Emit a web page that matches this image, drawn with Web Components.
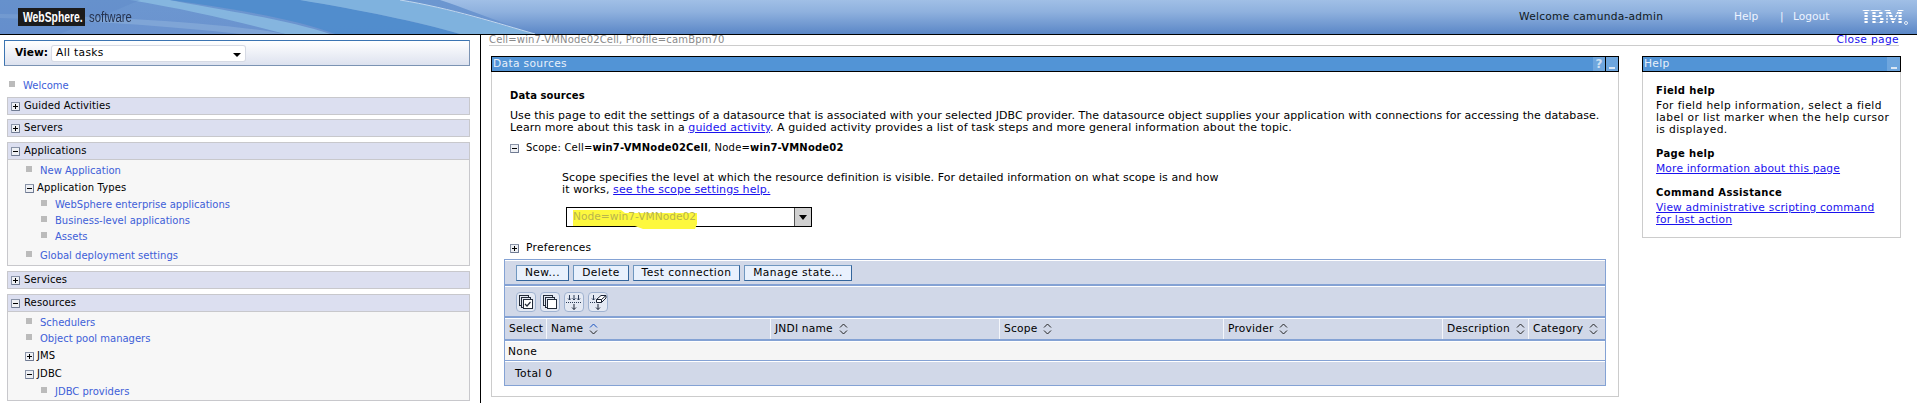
<!DOCTYPE html>
<html>
<head>
<meta charset="utf-8">
<title>WebSphere Integrated Solutions Console</title>
<style>
  html, body { margin: 0; height: 403px; overflow: hidden; background: #fff; }
  body { font: 10.67px/12px "DejaVu Sans", Verdana, sans-serif; color: #000; }
  .page { display: flex; height: 368px; }
</style>
</head>
<body>
<ws-banner></ws-banner>
<div class="page">
  <ws-nav>
    <nav-link level="0" style="margin-top:12px">Welcome</nav-link>
    <nav-section label="Guided Activities" style="margin-top:3px"></nav-section>
    <nav-section label="Servers" style="margin-top:4px"></nav-section>
    <nav-section label="Applications" open style="margin-top:5px">
      <nav-link level="1" style="margin-top:3px">New Application</nav-link>
      <nav-label state="minus" style="margin-top:1px">Application Types</nav-label>
      <nav-link level="2" style="margin-top:1px">WebSphere enterprise applications</nav-link>
      <nav-link level="2">Business-level applications</nav-link>
      <nav-link level="2">Assets</nav-link>
      <nav-link level="1" style="margin:3px 0 1px">Global deployment settings</nav-link>
    </nav-section>
    <nav-section label="Services" style="margin-top:5px"></nav-section>
    <nav-section label="Resources" open style="margin-top:5px">
      <nav-link level="1" style="margin-top:3px">Schedulers</nav-link>
      <nav-link level="1">Object pool managers</nav-link>
      <nav-label state="plus" style="margin-top:1px">JMS</nav-label>
      <nav-label state="minus" style="margin-top:2px">JDBC</nav-label>
      <nav-link level="2" style="margin-top:2px">JDBC providers</nav-link>
    </nav-section>
  </ws-nav>
  <ws-content></ws-content>
</div>

<script>
const FONT = `"DejaVu Sans", Verdana, sans-serif`

class TreeToggle extends HTMLElement{
    constructor(){
        super()
        this._shadowRoot = this.attachShadow({mode: 'open'})
    }
    connectedCallback(){
        const plus = this.getAttribute('state') === 'plus'
        this._shadowRoot.innerHTML = `
            <style>:host{display:block;width:9px;height:9px;flex:none} svg{display:block}</style>
            <svg width="9" height="9" viewBox="0 0 9 9">
                <rect x=".5" y=".5" width="8" height="8" fill="#eef0f4" stroke="#8a94a8"/>
                <path d="M8.5 1v7.5H1" fill="none" stroke="#6f7a92"/>
                <path d="M2 4.5h5" stroke="#000"/>
                ${plus ? '<path d="M4.5 2v5" stroke="#000"/>' : ''}
            </svg>`
    }
}
customElements.define('tree-toggle', TreeToggle)

class WsBanner extends HTMLElement{
    constructor(){
        super()
        this._shadowRoot = this.attachShadow({mode: 'open'})
    }
    connectedCallback(){
        this._shadowRoot.innerHTML = `
            <style>
                :host{
                    display:flex;align-items:center;position:relative;overflow:hidden;
                    height:34px;border-bottom:1px solid #000;
                    background:linear-gradient(#a0bfe6,#8fb1de 35%,#5b87c7);
                    font:10.67px/12px ${FONT};
                }
                .swoosh{position:absolute;left:0;top:0}
                .brand,.right{position:relative;display:flex;align-items:center}
                .ws{margin-left:18px;width:67px;height:18px;background:#1b1b1b;overflow:hidden}
                .ws span,.sw span{
                    display:block;white-space:nowrap;transform-origin:0 50%;
                    font-family:"Liberation Sans",sans-serif;font-size:14px;line-height:18px;
                }
                .ws span{color:#fff;font-weight:bold;transform:translateX(5px) scaleX(.74)}
                .sw{margin-left:4px;width:44px;height:18px}
                .sw span{color:#26334f;transform:scaleX(.81)}
                .right{margin-left:auto}
                .welcome{color:#101820;width:215px;letter-spacing:.25px}
                .help{color:#eef4ff;width:46px}
                .sep{color:#eef4ff;width:13px}
                .logout{color:#eef4ff;width:69px}
                .ibm{
                    position:relative;width:55px;font:bold 21px/17px "Liberation Serif",serif;
                    background:repeating-linear-gradient(#fff 0 2px,transparent 2px 3px);
                    -webkit-background-clip:text;background-clip:text;color:transparent;
                }
                .ibm::after{
                    content:"";position:absolute;left:42px;bottom:1px;width:2px;height:2px;
                    border:1px solid #e8f0fa;border-radius:50%;
                }
            </style>
            <svg class="swoosh" width="560" height="34" viewBox="0 0 560 34">
                <defs><linearGradient id="base" x1="0" y1="0" x2="0" y2="1">
                    <stop offset="0" stop-color="#6c97d0"/><stop offset="1" stop-color="#6b93cf"/>
                </linearGradient></defs>
                <path d="M0 0H440C470 10 505 24 535 34H0Z" fill="url(#base)"/>
                <path d="M130 0C190 10 240 22 285 34H330C290 20 210 8 170 0Z" fill="#8ec0e4" opacity=".75"/>
                <path d="M170 0C230 8 300 20 335 34H460C420 22 350 8 300 0Z" fill="#4f8ccc" opacity=".9"/>
                <path d="M300 0C360 10 420 22 460 34H535C490 22 440 6 400 0Z" fill="#7fb2de"/>
                <path d="M400 0C450 8 500 24 535 34" fill="none" stroke="#c2d8ee" stroke-width="1"/>
                <path d="M0 14C90 16 220 22 285 34H240C170 26 80 20 0 18Z" fill="#8fb2dc" opacity=".55"/>
                <path d="M0 0H140L60 34H0Z" fill="#5b86c6" opacity=".35"/>
            </svg>
            <div class="brand">
                <div class="ws"><span>WebSphere.</span></div><div class="sw"><span>software</span></div>
            </div>
            <div class="right">
                <div class="welcome">Welcome camunda-admin</div>
                <div class="help">Help</div>
                <div class="sep">|</div>
                <div class="logout">Logout</div>
                <div class="ibm">IBM</div>
            </div>`
    }
}
customElements.define('ws-banner', WsBanner)

class WsNav extends HTMLElement{
    constructor(){
        super()
        this._shadowRoot = this.attachShadow({mode: 'open'})
    }
    connectedCallback(){
        this._shadowRoot.innerHTML = `
            <style>
                :host{
                    display:block;flex:none;box-sizing:border-box;width:481px;height:368px;
                    border-right:1px solid #000;overflow:hidden;padding:5px 10px 0 4px;font-size:10px;
                }
                .view{
                    box-sizing:border-box;height:26px;display:flex;align-items:center;font-size:10.67px;
                    border:1px solid #7b93b3;border-top-color:#3b74b2;border-left-color:#3b74b2;
                    background:linear-gradient(#fff,#dde2ef);padding-left:10px;
                }
                b{width:37px;font-weight:bold}
                .sel{
                    box-sizing:border-box;width:193px;height:15px;background:#fff;border-radius:2px;
                    padding:0 4px;display:flex;align-items:center;justify-content:space-between;
                    box-shadow:0 0 0 1px #d6dae4;
                    letter-spacing:.35px;
                }
                .arr{width:0;height:0;border:4px solid transparent;border-top:4px solid #000;border-bottom:0;margin:3px 0 0}
                .list{padding-left:3px}
            </style>
            <div class="view"><b>View:</b><div class="sel"><span>All tasks</span><span class="arr"></span></div></div>
            <div class="list"><slot></slot></div>`
    }
}
customElements.define('ws-nav', WsNav)

class NavSection extends HTMLElement{
    constructor(){
        super()
        this._shadowRoot = this.attachShadow({mode: 'open'})
    }
    connectedCallback(){
        const open = this.hasAttribute('open')
        this._shadowRoot.innerHTML = `
            <style>
                :host{display:block;box-sizing:border-box;border:1px solid #c8c8cc;background:#f7f7f7}
                .head{
                    box-sizing:border-box;height:16px;display:flex;align-items:center;gap:4px;
                    padding-left:3px;background:#dcdff0;letter-spacing:.12px;white-space:nowrap;
                    ${open ? 'height:17px;border-bottom:1px solid #c8c8cc;' : ''}
                }
            </style>
            <div class="head"><tree-toggle state="${open ? 'minus' : 'plus'}"></tree-toggle><span>${this.getAttribute('label')}</span></div>
            <slot></slot>`
    }
}
customElements.define('nav-section', NavSection)

class NavLink extends HTMLElement{
    constructor(){
        super()
        this._shadowRoot = this.attachShadow({mode: 'open'})
    }
    connectedCallback(){
        this._shadowRoot.innerHTML = `
            <style>
                :host{display:flex;height:16px;align-items:center;color:#4060d8;white-space:nowrap}
                :host([level="0"]){padding-left:2px}
                :host([level="1"]){padding-left:18px}
                :host([level="2"]){padding-left:33px}
                i{width:6px;height:6px;background:#bbb;margin:-4px 8px 0 0;flex:none}
            </style>
            <i></i><span><slot></slot></span>`
    }
}
customElements.define('nav-link', NavLink)

class NavLabel extends HTMLElement{
    constructor(){
        super()
        this._shadowRoot = this.attachShadow({mode: 'open'})
    }
    connectedCallback(){
        this._shadowRoot.innerHTML = `
            <style>
                :host{display:flex;height:16px;align-items:center;gap:3px;padding-left:17px;white-space:nowrap;letter-spacing:.12px}
            </style>
            <tree-toggle state="${this.getAttribute('state')}"></tree-toggle><span><slot></slot></span>`
    }
}
customElements.define('nav-label', NavLabel)

class WsPortlet extends HTMLElement{
    constructor(){
        super()
        this._shadowRoot = this.attachShadow({mode: 'open'})
    }
    connectedCallback(){
        const help = this.hasAttribute('help')
        this._shadowRoot.innerHTML = `
            <style>
                :host{display:block;box-sizing:border-box;border:1px solid #ccc;border-top:0}
                .title{
                    margin:0 -1px;height:14px;display:flex;align-items:center;padding-left:1px;letter-spacing:.35px;
                    border:1px solid #000;border-width:1px 1px;background:#5294d6;color:#e8f0fa;
                }
                .title span{flex:1}
                .b{width:12px;height:14px;background:#6ea6de;display:flex;align-items:center;justify-content:center;color:#cfe0f2;font-weight:bold;font-size:12px;letter-spacing:0}
                .min{border-left:1px solid #000}
                .min::after{content:"";width:6px;height:2px;background:#dbe7f4;margin-top:7px}
                .nosep{border-left:0;width:13px}
            </style>
            <div class="title"><span>${this.getAttribute('label')}</span>${help ? '<div class="b">?</div><div class="b min"></div>' : '<div class="b min nosep"></div>'}</div>
            <slot></slot>`
    }
}
customElements.define('ws-portlet', WsPortlet)

class WsButton extends HTMLElement{
    constructor(){
        super()
        this._shadowRoot = this.attachShadow({mode: 'open'})
    }
    connectedCallback(){
        this._shadowRoot.innerHTML = `
            <style>
                :host{
                    display:flex;box-sizing:border-box;height:16px;align-items:center;justify-content:center;
                    background:#e9f1fd;border:1px solid #6f97c0;border-right-color:#33659c;border-bottom-color:#33659c;
                    letter-spacing:.45px;white-space:nowrap;
                }
            </style><slot></slot>`
    }
}
customElements.define('ws-button', WsButton)

class ToolBtn extends HTMLElement{
    constructor(){
        super()
        this._shadowRoot = this.attachShadow({mode: 'open'})
    }
    connectedCallback(){
        const pages = `<rect x="2.5" y="2.5" width="9" height="10" fill="#e4e9f3" stroke="#222a38"/>
                       <rect x="4.5" y="4.5" width="9" height="10" fill="#e4e9f3" stroke="#222a38"/>
                       <rect x="6.5" y="6.5" width="9" height="9" fill="#fff" stroke="#222a38"/>`
        const icons = {
            all: `${pages}<path d="M8 11l2 2 3.5-4" fill="none" stroke="#222a38" stroke-width="1.2"/>`,
            none: pages,
            filter: `<path d="M4.5 2v5M3 5.5L4.5 7 6 5.5M9 2v5M7.5 5.5L9 7l1.5-1.5M13.5 2v5M12 5.5L13.5 7 15 5.5" fill="none" stroke="#2a3a55"/>
                     <path d="M1 9.5h16" stroke="#2a3a55" stroke-dasharray="1 1"/>
                     <path d="M9 11v5.5M7 14.5l2 2 2-2" fill="none" stroke="#1a2233"/>`,
            clear: `<path d="M4.5 2v5M3 5.5L4.5 7 6 5.5" fill="none" stroke="#2a3a55"/><path d="M1 9.5h6" stroke="#2a3a55" stroke-dasharray="1 1"/>
                     <path d="M7.5 6.5l4.5-4h5v2.5l-4.5 4.5h-5z" fill="#fff" stroke="#1a2233"/><path d="M7.5 6.5h5v3M12.5 6.5L17 2.5" fill="none" stroke="#1a2233"/>
                     <path d="M9 11v5.5M7 14.5l2 2 2-2" fill="none" stroke="#1a2233"/>`
        }
        this._shadowRoot.innerHTML = `
            <style>
                :host{display:block;box-sizing:border-box;width:20px;height:20px;border:1px solid #9fb2d0;border-radius:4px;background:#e4e9f3}
                svg{display:block}
            </style>
            <svg width="18" height="18" viewBox="0 0 18 18">${icons[this.getAttribute('kind')]}</svg>`
    }
}
customElements.define('tool-btn', ToolBtn)

class SortHead extends HTMLElement{
    constructor(){
        super()
        this._shadowRoot = this.attachShadow({mode: 'open'})
    }
    connectedCallback(){
        const up = this.hasAttribute('active') ? '#1450c0' : '#222'
        const text = this.textContent
        this._shadowRoot.innerHTML = `
            <style>
                :host{display:flex;align-items:center;gap:6px;box-sizing:border-box;padding-left:4px;height:100%;border-left:1px solid #f4f6fb;white-space:nowrap;letter-spacing:.2px}
                svg{display:block;flex:none}
            </style>
            <span>${text}</span>
            ${this.hasAttribute('plain') ? '' : `<svg width="9" height="12" viewBox="0 0 9 12"><path d="M1 4.5l3.5-3.5L8 4.5" fill="none" stroke="${up}"/><path d="M1 7.5L4.5 11 8 7.5" fill="none" stroke="#222"/></svg>`}`
    }
}
customElements.define('sort-head', SortHead)

class WsTable extends HTMLElement{
    constructor(){
        super()
        this._shadowRoot = this.attachShadow({mode: 'open'})
    }
    connectedCallback(){
        this._shadowRoot.innerHTML = `
            <style>
                :host{display:block;box-sizing:border-box;border:1px solid #84a2d4;background:#d1d8e8;letter-spacing:.35px}
                .row{box-sizing:border-box;border-top:1px solid #fff;border-bottom:2px solid #84a2d4}
                .row:last-child{border-bottom:0}
                .btns{height:26px;display:flex;align-items:center;gap:4px;padding:1px 0 0 11px}
                .tools{height:32px;display:flex;align-items:center;gap:4px;padding-left:11px}
                .head{height:23px;display:grid;grid-template-columns:41px 224px 229px 224px 219px 86px 1fr;align-items:center}
                .none{height:20px;background:#f5f5f5;line-height:19px;padding-left:3px;border-bottom-width:1px}
                .total{height:24px;line-height:23px;padding-left:10px}
            </style>
            <div class="row btns">
                <ws-button style="width:53px">New...</ws-button>
                <ws-button style="width:56px">Delete</ws-button>
                <ws-button style="width:107px">Test connection</ws-button>
                <ws-button style="width:108px">Manage state...</ws-button>
            </div>
            <div class="row tools">
                <tool-btn kind="all"></tool-btn><tool-btn kind="none"></tool-btn><tool-btn kind="filter"></tool-btn><tool-btn kind="clear"></tool-btn>
            </div>
            <div class="row head">
                <sort-head plain style="border:0">Select</sort-head>
                <sort-head active>Name</sort-head>
                <sort-head>JNDI name</sort-head>
                <sort-head>Scope</sort-head>
                <sort-head>Provider</sort-head>
                <sort-head>Description</sort-head>
                <sort-head>Category</sort-head>
            </div>
            <div class="row none">None</div>
            <div class="row total">Total 0</div>`
    }
}
customElements.define('ws-table', WsTable)

class ScopeSelect extends HTMLElement{
    constructor(){
        super()
        this._shadowRoot = this.attachShadow({mode: 'open'})
    }
    connectedCallback(){
        this._shadowRoot.innerHTML = `
            <style>
                :host{
                    display:flex;position:relative;box-sizing:border-box;width:246px;height:20px;
                    border:1px solid #000;background:#fff;align-items:center;padding-left:6px;
                }
                span{position:relative;flex:1;color:#b9b54c}
                svg{position:absolute;left:6px;top:1px}
                .btn{
                    position:relative;box-sizing:border-box;width:17px;height:18px;background:#d0d0d0;
                    border-left:1px solid #555;display:flex;align-items:center;justify-content:center;
                }
                .btn::after{content:"";border:4px solid transparent;border-top:5px solid #000;border-bottom:0}
            </style>
            <svg width="126" height="22" viewBox="0 0 126 22">
                <path d="M0 1H48L52 4H124V15L122 20H70L62 17H0Z" fill="#fdf83e"/>
            </svg>
            <span>Node=win7-VMNode02</span>
            <div class="btn"></div>`
    }
}
customElements.define('scope-select', ScopeSelect)

class WsContent extends HTMLElement{
    constructor(){
        super()
        this._shadowRoot = this.attachShadow({mode: 'open'})
    }
    connectedCallback(){
        this._shadowRoot.innerHTML = `
            <style>
                :host{display:block;flex:1;min-width:0;padding-left:8px;box-sizing:border-box}
                a{color:#1a12ee;text-decoration:underline}
                .crumb{
                    width:1410px;box-sizing:border-box;height:11px;border-bottom:1px solid #ccc;
                    display:flex;justify-content:space-between;line-height:10px;color:#8a8a8a;
                }
                .crumb span{font-size:10px;letter-spacing:.15px}
                .crumb a{text-decoration:none;line-height:9px;letter-spacing:.35px}
                .cols{display:flex;margin:10px 0 0 2px;align-items:flex-start}
                ws-portlet.main{width:1128px;height:341px}
                ws-portlet.side{width:259px;height:182px;margin-left:23px}
                .body{padding:18px 0 0 18px;white-space:nowrap}
                h4{margin:0;font:inherit;font-weight:bold;font-size:10px}
                .body h4{letter-spacing:.1px}
                .txt{font-size:11px;letter-spacing:.05px}
                .wide{letter-spacing:.09px}
                .tog{display:flex;align-items:center;gap:7px;height:12px}
                .scope{font-size:10px;letter-spacing:.2px}
                .scope b{font-weight:bold}
                .indent{margin:18px 0 0 52px}
                .sel{margin:11px 0 0 56px}
                .tbl{margin:5px 0 0 -6px;width:1102px}
                .pref{margin-top:15px;letter-spacing:.25px}
                .hbody{padding:13px 0 0 13px;white-space:nowrap}
                .hbody h4{letter-spacing:.35px}
                .hbody p{margin:3px 0 12px;letter-spacing:.4px}
                .hbody p.lk{letter-spacing:.18px}
                .hbody p:last-child{margin-bottom:0}
            </style>
            <div class="crumb"><span>Cell=win7-VMNode02Cell, Profile=camBpm70</span><a>Close page</a></div>
            <div class="cols">
                <ws-portlet class="main" label="Data sources" help>
                    <div class="body">
                        <h4>Data sources</h4>
                        <div class="txt" style="margin-top:8px">Use this page to edit the settings of a datasource that is associated with your selected JDBC provider. The datasource object supplies your application with connections for accessing the database.<br><span class="wide">Learn more about this task in a <a>guided activity</a>. A guided activity provides a list of task steps and more general information about the topic.</span></div>
                        <div class="tog" style="margin-top:8px"><tree-toggle state="minus"></tree-toggle><span class="scope">Scope: Cell=<b>win7-VMNode02Cell</b>, Node=<b>win7-VMNode02</b></span></div>
                        <div class="indent txt">Scope specifies the level at which the resource definition is visible. For detailed information on what scope is and how<br><span class="wide">it works, <a>see the scope settings help.</a></span></div>
                        <div class="sel"><scope-select></scope-select></div>
                        <div class="tog pref"><tree-toggle state="plus"></tree-toggle><span>Preferences</span></div>
                        <div class="tbl"><ws-table></ws-table></div>
                    </div>
                </ws-portlet>
                <ws-portlet class="side" label="Help">
                    <div class="hbody">
                        <h4>Field help</h4>
                        <p>For field help information, select a field<br>label or list marker when the help cursor<br>is displayed.</p>
                        <h4>Page help</h4>
                        <p class="lk"><a>More information about this page</a></p>
                        <h4>Command Assistance</h4>
                        <p class="lk"><a>View administrative scripting command<br>for last action</a></p>
                    </div>
                </ws-portlet>
            </div>`
    }
}
customElements.define('ws-content', WsContent)
</script>
</body>
</html>
